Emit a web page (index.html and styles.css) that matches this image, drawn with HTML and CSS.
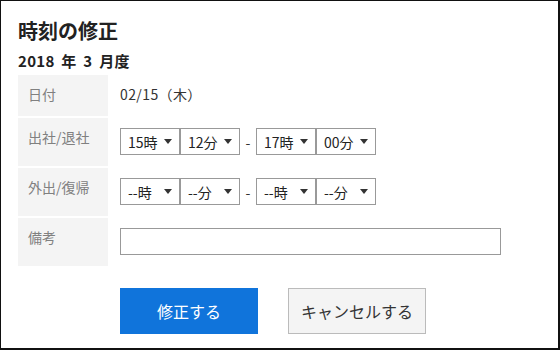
FILE: index.html
```html
<!DOCTYPE html>
<html lang="ja">
<head>
    <meta charset="UTF-8">
    <title>時刻の修正</title>
    <link rel="stylesheet" href="styles.css">
</head>
<body>
    <div class="screen">
        <h1 class="title">時刻の修正</h1>
        <h2 class="period">2018 年 3 月度</h2>
        <table class="form">
            <tr class="row-first">
                <th>日付</th>
                <td class="date">02/15（木）</td>
            </tr>
            <tr>
                <th>出社/退社</th>
                <td>
                    <div class="times">
                        <span class="pick">15時<i class="caret"></i></span>
                        <span class="pick">12分<i class="caret"></i></span>
                        <span class="dash">-</span>
                        <span class="pick">17時<i class="caret"></i></span>
                        <span class="pick">00分<i class="caret"></i></span>
                    </div>
                </td>
            </tr>
            <tr>
                <th>外出/復帰</th>
                <td>
                    <div class="times">
                        <span class="pick">--時<i class="caret"></i></span>
                        <span class="pick">--分<i class="caret"></i></span>
                        <span class="dash">-</span>
                        <span class="pick">--時<i class="caret"></i></span>
                        <span class="pick">--分<i class="caret"></i></span>
                    </div>
                </td>
            </tr>
            <tr>
                <th>備考</th>
                <td><input class="note" type="text"></td>
            </tr>
        </table>
        <div class="actions">
            <button class="btn btn-primary">修正する</button>
            <button class="btn btn-cancel">キャンセルする</button>
        </div>
    </div>
</body>
</html>
```

FILE: styles.css
```css
body { margin: 0; font-family: "Noto Sans CJK JP", "Noto Sans", sans-serif; color: #333; background: #fff; }
.screen { width: 560px; height: 350px; box-sizing: border-box; border: 1px solid #111; border-bottom-width: 2px; border-right-width: 2px; padding: 16px 17px 0; }
.title { margin: 0; font-size: 20px; line-height: 28px; font-weight: bold; color: #222; }
.period { margin: 6px 0 0; font-size: 15px; line-height: 20px; font-weight: bold; color: #222; word-spacing: 3px; letter-spacing: 0.3px; }
.form { border-collapse: separate; border-spacing: 0 2px; margin-top: 2px; }
.form th { width: 90px; height: 48px; box-sizing: border-box; background: #f4f4f4; color: #808080; font-weight: normal; font-size: 14px; line-height: 20px; text-align: left; vertical-align: top; padding: 9px 0 0 10px; }
.form tr.row-first th { height: 41px; }
.form td { padding: 10px 0 11px 12px; vertical-align: top; font-size: 14px; line-height: 20px; }
.form tr.row-first td { padding-top: 9px; padding-bottom: 0; }
.date { color: #333; letter-spacing: 0.4px; }
.times { display: flex; align-items: center; }
.pick { display: flex; align-items: center; justify-content: space-between; width: 60px; height: 27px; box-sizing: border-box; border: 1px solid #999; padding: 0 7px; font-size: 14px; color: #222; background: #fff; }
.caret { width: 0; height: 0; border-left: 4px solid transparent; border-right: 4px solid transparent; border-top: 5px solid #333; }
.dash { width: 16px; text-align: center; font-size: 14px; color: #333; }
.note { display: block; width: 381px; height: 27px; box-sizing: border-box; border: 1px solid #999; margin: 0; padding: 2px 6px; font-size: 14px; }
.actions { display: flex; gap: 30px; margin: 20px 0 0 102px; }
.btn { width: 138px; height: 46px; font-family: inherit; font-size: 16px; box-sizing: border-box; cursor: pointer; }
.btn-primary { background: #1074db; color: #fff; border: none; }
.btn-cancel { background: #f4f4f4; color: #333; border: 1px solid #bbb; }
```
